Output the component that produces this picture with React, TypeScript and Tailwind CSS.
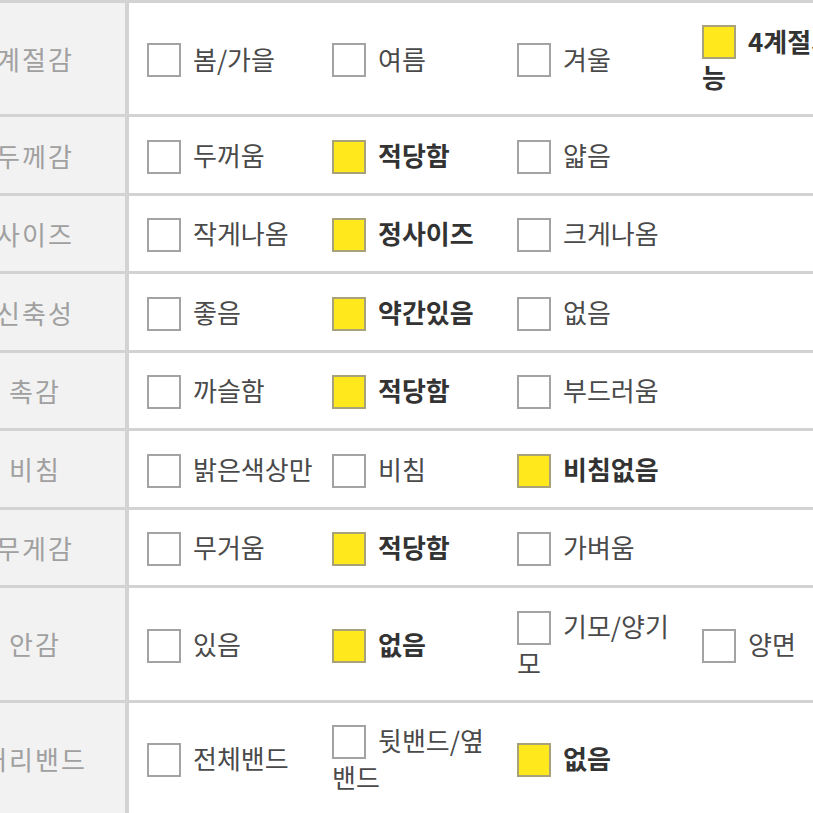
import React from 'react';

type Option = { label: string; checked?: boolean };
type Row = { title: string; options: Option[] };

const rows: Row[] = [
  { title: '계절감', options: [{ label: '봄/가을' }, { label: '여름' }, { label: '겨울' }, { label: '4계절가능', checked: true }] },
  { title: '두께감', options: [{ label: '두꺼움' }, { label: '적당함', checked: true }, { label: '얇음' }] },
  { title: '사이즈', options: [{ label: '작게나옴' }, { label: '정사이즈', checked: true }, { label: '크게나옴' }] },
  { title: '신축성', options: [{ label: '좋음' }, { label: '약간있음', checked: true }, { label: '없음' }] },
  { title: '촉감', options: [{ label: '까슬함' }, { label: '적당함', checked: true }, { label: '부드러움' }] },
  { title: '비침', options: [{ label: '밝은색상만' }, { label: '비침' }, { label: '비침없음', checked: true }] },
  { title: '무게감', options: [{ label: '무거움' }, { label: '적당함', checked: true }, { label: '가벼움' }] },
  { title: '안감', options: [{ label: '있음' }, { label: '없음', checked: true }, { label: '기모/양기모' }, { label: '양면' }] },
  { title: '허리밴드', options: [{ label: '전체밴드' }, { label: '뒷밴드/옆밴드' }, { label: '없음', checked: true }] },
];

function CheckItem({ label, checked, last }: Option & { last: boolean }) {
  return (
    <span
      className={
        last
          ? 'inline-block w-[145px] align-middle text-[26px] leading-[36px]'
          : 'inline-block w-[170px] mr-[15px] align-middle text-[26px] leading-[36px]'
      }
    >
      <span
        className={
          checked
            ? 'inline-block w-[34px] h-[34px] mr-[12px] align-middle -mt-[4px] border-2 border-[#a7a27a] bg-[#ffe81c]'
            : 'inline-block w-[34px] h-[34px] mr-[12px] align-middle -mt-[4px] border-2 border-[#a3a3a3] bg-white'
        }
      />
      <span className={checked ? 'font-bold text-[#333333]' : 'text-[#4a4a4a]'}>{label}</span>
    </span>
  );
}

export default function App() {
  return (
    <div className="w-[813px] h-[813px] overflow-hidden bg-white font-['Noto_Sans_CJK_KR','Noto_Sans',sans-serif]">
      <div className="-ml-[55px] w-[960px] border-t-[3px] border-[#d3d3d3]">
        {rows.map((row) => (
          <div key={row.title} className="flex border-b-[3px] border-[#d3d3d3]">
            <div className="w-[184px] shrink-0 bg-[#f2f2f2] border-r-[4px] border-[#d3d3d3] flex items-center justify-center text-[26px] tracking-[2px] text-[#a0a0a0]">
              {row.title}
            </div>
            <div className="w-[775px] pl-[18px] pt-[19.5px] pb-[19px] text-[0px] leading-[0]">
              {row.options.map((o, i) => (
                <CheckItem key={o.label} {...o} last={i === 3} />
              ))}
            </div>
          </div>
        ))}
      </div>
    </div>
  );
}
